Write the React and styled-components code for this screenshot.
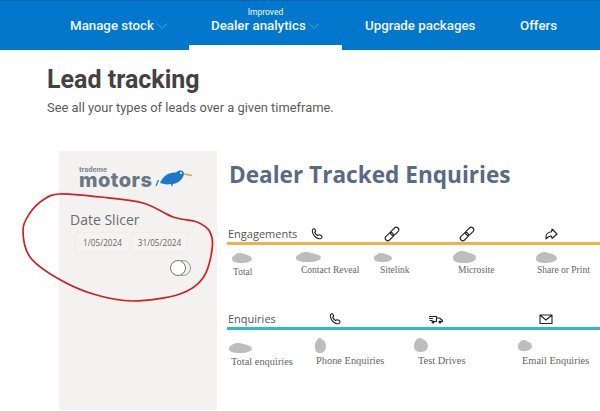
import React from "react";
import styled, { createGlobalStyle } from "styled-components";

const Global = createGlobalStyle`
  html, body { margin: 0; padding: 0; background: #fff; }
  body { width: 600px; height: 411px; overflow: hidden; font-family: "Roboto", "Liberation Sans", sans-serif; }
`;

const Page = styled.div`
  position: relative;
  width: 600px;
  height: 411px;
  overflow: hidden;
`;

const Nav = styled.nav`
  height: 50px;
  background: #0277cc;
  border-top: 1px solid #0268b4;
  box-sizing: border-box;
  display: flex;
  padding-left: 61px;
`;

const NavItem = styled.div`
  position: relative;
  width: ${p => p.$w}px;
  box-sizing: border-box;
  padding-top: 17px;
  padding-left: ${p => p.$pad || 0}px;
  color: #f2f8fd;
  font-size: 13.3px;
  font-weight: 500;
  white-space: nowrap;
  ${p => p.$active && `border-bottom: 5px solid #fff;`}
`;

const Badge = styled.span`
  position: absolute;
  top: 6px;
  left: 0;
  right: 0;
  text-align: center;
  font-size: 8.5px;
  font-weight: 400;
`;

const Chevron = styled.svg`
  width: 12px;
  height: 6px;
  margin-left: 2px;
  vertical-align: 1px;
`;

const Header = styled.header`
  padding: 17px 0 0 47px;
`;

const Title = styled.h1`
  margin: 0;
  font-size: 25px;
  line-height: 26px;
  font-weight: 700;
  color: #454141;
`;

const Sub = styled.p`
  margin: 7px 0 0;
  font-size: 12.9px;
  line-height: 15px;
  color: #5c5a5a;
`;

const Report = styled.div`
  display: flex;
  margin-top: 36px;
  padding-left: 59px;
`;

const Side = styled.aside`
  width: 158px;
  height: 259px;
  background: #f3f2f1;
  box-sizing: border-box;
  padding: 15px 0 0 11px;
  flex: none;
`;

const Logo = styled.div`
  position: relative;
  width: 112px;
  height: 21px;
  margin-left: 9px;
`;

const LogoSmall = styled.span`
  display: block;
  font-size: 7.5px;
  line-height: 7px;
  font-weight: 700;
  color: #7c8797;
`;

const LogoBig = styled.span`
  display: block;
  font-family: "Inter", sans-serif;
  font-size: 20px;
  line-height: 14px;
  font-weight: 800;
  color: #6b7686;
  letter-spacing: 0.45px;
`;

const Kiwi = styled.svg`
  position: absolute;
  left: 76px;
  top: 3px;
  width: 38px;
  height: 20px;
`;

const SlicerTitle = styled.div`
  margin-top: 24px;
  font-family: "Open Sans", sans-serif;
  font-size: 14px;
  line-height: 18px;
  color: #6a6a6a;
`;

const Dates = styled.div`
  display: flex;
  gap: 2px;
  margin: 3px 0 0 5px;
`;

const DateBox = styled.div`
  width: 53px;
  height: 19px;
  line-height: 19px;
  text-align: center;
  font-family: "Open Sans", sans-serif;
  font-size: 8.2px;
  color: #666;
  background: #f4f3f2;
  border: 1px solid #eeedec;
`;

const Toggle = styled.div`
  position: relative;
  margin: 7px 0 0 100px;
  width: 22px;
  height: 18px;
`;

const Knob = styled.span`
  position: absolute;
  top: 0;
  left: ${p => p.$x}px;
  width: 14px;
  height: 14px;
  border-radius: 50%;
  border: 1px solid ${p => p.$c};
  background: ${p => p.$bg};
`;

const Main = styled.main`
  flex: 1;
  min-width: 0;
  padding: 10px 0 0 11px;
  margin-left: -1px;
`;

const ReportTitle = styled.h2`
  margin: 0 0 0 2px;
  font-family: "Open Sans", sans-serif;
  font-size: 22.6px;
  line-height: 28px;
  font-weight: 700;
  color: #596a82;
  white-space: nowrap;
`;

const Section = styled.section`
  margin-top: ${p => p.$top}px;
`;

const SectionHead = styled.div`
  position: relative;
  height: 19px;
  border-bottom: 3px solid ${p => p.$c};
  margin-right: -30px;
`;

const SectionLabel = styled.span`
  display: block;
  padding: 3px 0 0 1px;
  height: 16px;
  font-family: "Open Sans", sans-serif;
  font-size: 11px;
  line-height: 16px;
  color: #555;
`;

const IconSlot = styled.svg`
  position: absolute;
  left: ${p => p.$x}px;
  top: 4px;
  width: 14px;
  height: 14px;
  overflow: visible;
  fill: none;
  stroke: #222;
  stroke-width: 1.1;
  stroke-linecap: round;
  stroke-linejoin: round;
`;

const Stats = styled.div`
  position: relative;
  height: 48px;
`;

const Stat = styled.div`
  position: absolute;
  left: ${p => p.$x}px;
  top: ${p => p.$y}px;
  font-family: "Liberation Serif", serif;
  font-size: ${p => p.$size}px;
  line-height: 12px;
  color: #666;
  white-space: nowrap;
`;

const Smudge = styled.span`
  position: absolute;
  left: ${p => p.$x}px;
  top: ${p => p.$y}px;
  width: ${p => p.$w}px;
  height: ${p => p.$h}px;
  background: #bdbdbd;
  border-radius: 45% 55% 50% 40%;
  filter: blur(0.6px);

  &::after {
    content: "";
    position: absolute;
    left: 15%;
    top: -1px;
    width: 50%;
    height: 60%;
    border-radius: 50%;
    background: #bdbdbd;
  }
`;

const Scribble = styled.svg`
  position: absolute;
  left: 0;
  top: 0;
  pointer-events: none;
  fill: none;
  stroke: #d0201f;
  stroke-width: 1.7;
`;

const phone = (
  <path d="M2.500 2.800C3.200 1.600 4.500 1.500 5 2.500l.6 1.300c.2.600-.2 1-.9 1.500.6 1.500 1.500 2.600 3 3.300.6-.6 1-1 1.700-.8l1.800.8c1.200.6 1 2.200-.2 2.800-1.500.7-3.300.3-4.800-.9C3.800 9 1.800 5 2.500 2.800z" />
);

const link = (
  <>
    <rect x="-1.500" y="4.500" width="9.500" height="5" rx="2.500" transform="rotate(-45 7 7)" />
    <rect x="6" y="4.500" width="9.500" height="5" rx="2.500" transform="rotate(-45 7 7)" />
  </>
);

const share = <path d="M8 2l5 5-5 4.500-.5-2.500C5.500 9 3.500 10 2 12 1 8 3.500 5 7.500 4.800z" />;

const truck = (
  <>
    <path d="M.5 4.500h7v5H5M7.500 6h3l3 2.500v1H12M.5 6.500h3M1 8.500h2" />
    <circle cx="4" cy="10" r="1" fill="#222" />
    <circle cx="11" cy="10" r="1" fill="#222" />
  </>
);

const mail = <path d="M1 3h12v8.500H1zM1.500 3.500L7 8l5.500-4.500" />;

const engagements = [
  { x: 83, glyph: phone },
  { x: 158, glyph: link },
  { x: 233, glyph: link },
  { x: 317, glyph: share },
];

const engagementStats = [
  { x: 6, y: 21, label: "Total" },
  { x: 74, y: 19, label: "Contact Reveal" },
  { x: 153, y: 19, label: "Sitelink" },
  { x: 231, y: 19, label: "Microsite" },
  { x: 310, y: 19, label: "Share or Print" },
];

const engagementSmudges = [
  { x: 5, y: 9, w: 20, h: 9 },
  { x: 69, y: 8, w: 25, h: 9 },
  { x: 147, y: 9, w: 18, h: 8 },
  { x: 226, y: 7, w: 23, h: 11 },
  { x: 309, y: 8, w: 21, h: 10 },
];

const enquiries = [
  { x: 101, glyph: phone },
  { x: 202, glyph: truck },
  { x: 312, glyph: mail },
];

const enquiryStats = [
  { x: 4, y: 26, label: "Total enquiries" },
  { x: 89, y: 25, label: "Phone Enquiries" },
  { x: 191, y: 25, label: "Test Drives" },
  { x: 295, y: 25, label: "Email Enquiries" },
];

const enquirySmudges = [
  { x: 2, y: 14, w: 23, h: 9 },
  { x: 88, y: 9, w: 11, h: 14 },
  { x: 187, y: 9, w: 14, h: 13 },
  { x: 291, y: 11, w: 14, h: 10 },
];

// hand-drawn ring round the date slicer, closed Catmull-Rom through these points
const ring = [
  [60, 194], [100, 197], [143, 203], [173, 217], [197, 222], [210, 232], [212, 250],
  [203, 278], [180, 294], [133, 301], [93, 294], [57, 278], [30, 257], [23, 230], [30, 213], [43, 200],
];

function ringPath(pts) {
  let d = `M${pts[0][0]} ${pts[0][1]}`;
  const n = pts.length;
  for (let i = 0; i < n; i++) {
    const [p0, p1, p2, p3] = [pts[(i + n - 1) % n], pts[i], pts[(i + 1) % n], pts[(i + 2) % n]];
    const c1 = [p1[0] + (p2[0] - p0[0]) / 6, p1[1] + (p2[1] - p0[1]) / 6];
    const c2 = [p2[0] - (p3[0] - p1[0]) / 6, p2[1] - (p3[1] - p1[1]) / 6];
    d += `C${c1[0]} ${c1[1]} ${c2[0]} ${c2[1]} ${p2[0]} ${p2[1]}`;
  }
  return d;
}

function Band({ label, color, icons, stats, smudges, top, size }) {
  return (
    <Section $top={top}>
      <SectionHead $c={color}>
        <SectionLabel>{label}</SectionLabel>
        {icons.map((ic, i) => (
          <IconSlot key={"icon-" + i} $x={ic.x} viewBox="0 0 14 14">
            {ic.glyph}
          </IconSlot>
        ))}
      </SectionHead>
      <Stats>
        {smudges.map((s, i) => (
          <Smudge key={"smudge-" + i} $x={s.x} $y={s.y} $w={s.w} $h={s.h} />
        ))}
        {stats.map((s, i) => (
          <Stat key={"stat-" + i} $x={s.x} $y={s.y} $size={size}>
            {s.label}
          </Stat>
        ))}
      </Stats>
    </Section>
  );
}

function NavChevron() {
  return (
    <Chevron viewBox="0 0 12 6" fill="none" stroke="#4aa8e8" strokeWidth="1">
      <path d="M1 .5l5 5 5-5" />
    </Chevron>
  );
}

export default function App() {
  return (
    <Page>
      <Global />
      <Nav>
        <NavItem $w={128} $pad={9}>
          Manage stock
          <NavChevron />
        </NavItem>
        <NavItem $w={153} $pad={22} $active>
          <Badge>Improved</Badge>
          Dealer analytics
          <NavChevron />
        </NavItem>
        <NavItem $w={178} $pad={23}>Upgrade packages</NavItem>
        <NavItem $w={80}>Offers</NavItem>
      </Nav>
      <Header>
        <Title>Lead tracking</Title>
        <Sub>See all your types of leads over a given timeframe.</Sub>
      </Header>
      <Report>
        <Side>
          <Logo>
            <LogoSmall>trademe</LogoSmall>
            <LogoBig>motors</LogoBig>
            <Kiwi viewBox="0 0 38 20">
              <path d="M1 17L3.500 11" stroke="#1b78c8" strokeWidth="1.2" />
              <path d="M5 14C8 7 14 3 21 3.500C24 .5 29 1 29 5C28 10 24 14 18 15L17 18L16 15C12 16 9 15 5 14z" fill="#1b78c8" />
              <path d="M29 5L37 6.500" stroke="#d9a441" strokeWidth="1.3" />
              <circle cx="26" cy="4" r="1" fill="#fff" />
            </Kiwi>
          </Logo>
          <SlicerTitle>Date Slicer</SlicerTitle>
          <Dates>
            <DateBox>1/05/2024</DateBox>
            <DateBox>31/05/2024</DateBox>
          </Dates>
          <Toggle>
            <Knob $x={5} $c="#999" $bg="#f3f2f1" />
            <Knob $x={0} $c="#777" $bg="#fff" />
          </Toggle>
        </Side>
        <Main>
          <ReportTitle>Dealer Tracked Enquiries</ReportTitle>
          <Band
            label="Engagements"
            color="#f0b04a"
            icons={engagements}
            stats={engagementStats}
            smudges={engagementSmudges}
            top={34}
            size={9.5}
          />
          <Band
            label="Enquiries"
            color="#2bbccb"
            icons={enquiries}
            stats={enquiryStats}
            smudges={enquirySmudges}
            top={15}
            size={10.4}
          />
        </Main>
      </Report>
      <Scribble width="600" height="411">
        <path d={ringPath(ring)} />
      </Scribble>
    </Page>
  );
}
